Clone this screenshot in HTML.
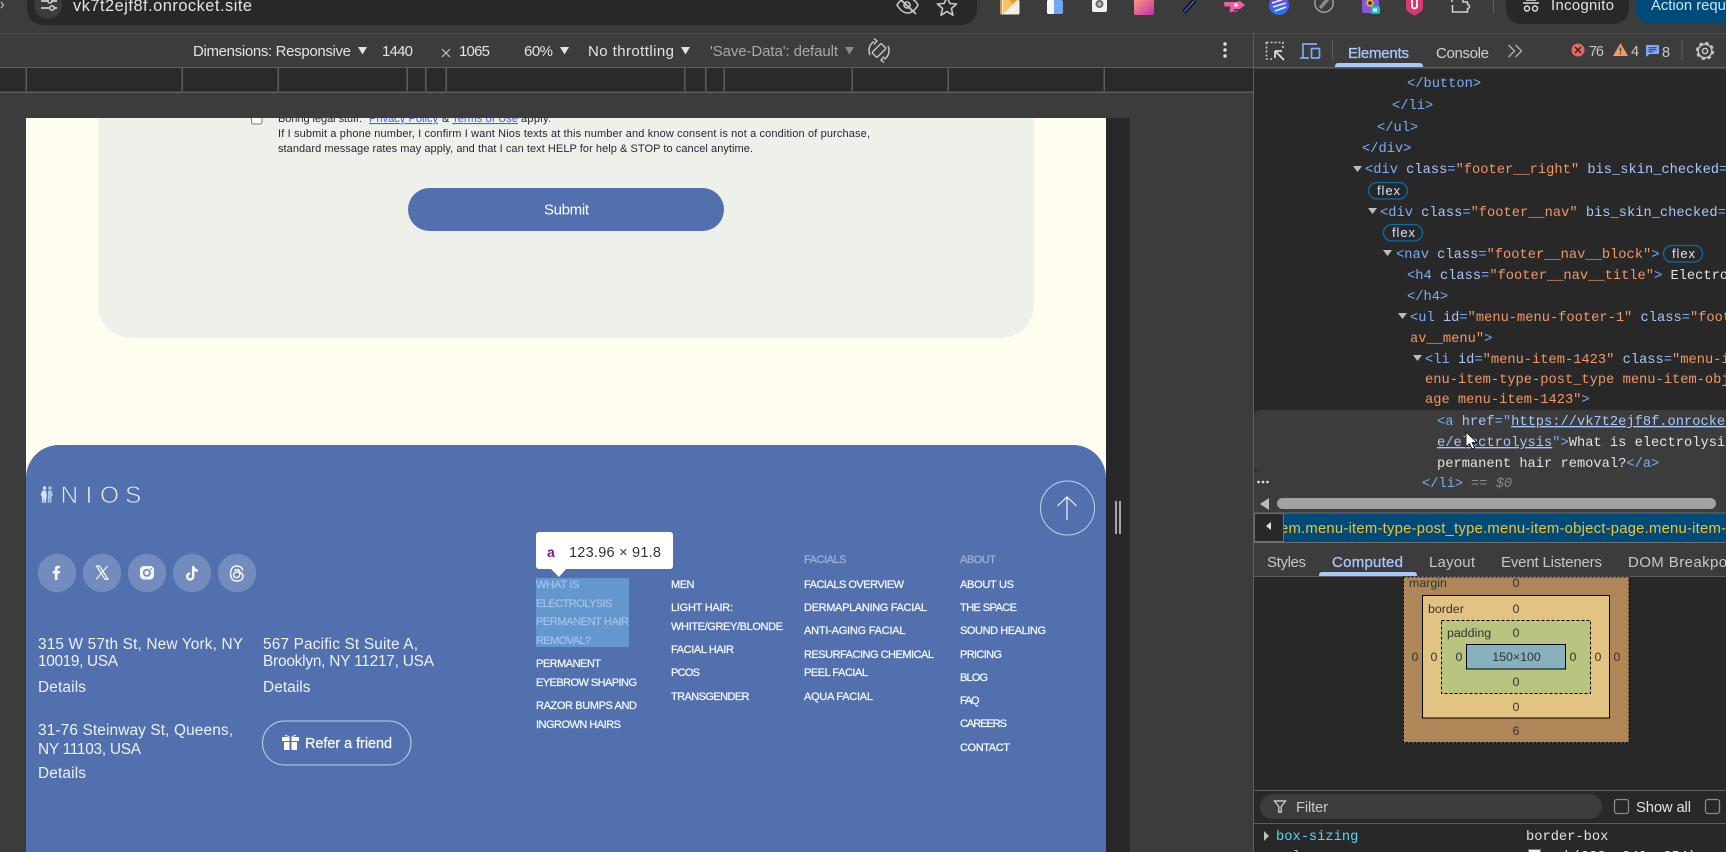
<!DOCTYPE html>
<html><head><meta charset="utf-8"><title>DevTools</title>
<style>
html,body{margin:0;padding:0;background:#3c3c3c;width:1726px;height:852px;overflow:hidden}
svg{display:block;font-family:"Liberation Sans",sans-serif}
.m{font-family:"Liberation Mono",monospace;font-size:13.72px}
.t{fill:#7cacf8}.a{fill:#a8c7fa}.v{fill:#f29766}.x{fill:#e3e3e3}
.l{font-size:11px;fill:#f6f8fc;stroke:#f6f8fc;stroke-width:.25px}
.h{font-size:11px;fill:#a4b4d8;stroke:#a4b4d8;stroke-width:.2px}
.hl{font-size:11px;fill:#a3c2e8;stroke:#a3c2e8;stroke-width:.2px}
.ad{font-size:15.4px;fill:#edf1f8}
.tb{font-size:15px;fill:#e3e3e3}
.dt{font-size:15px}
.bm{font-size:12.4px;fill:#333;text-anchor:middle}
.ml{font-size:12.4px;fill:#333}
</style></head><body>
<svg width="1726" height="852" viewBox="0 0 1726 852" xmlns="http://www.w3.org/2000/svg">
<defs>
<linearGradient id="g1" x1="0" y1="0" x2="1" y2="1"><stop offset="0" stop-color="#ffa07a"/><stop offset="1" stop-color="#c02cb0"/></linearGradient>
<linearGradient id="g2" x1="0" y1="0" x2="0" y2="1"><stop offset="0" stop-color="#7a3fe0"/><stop offset="1" stop-color="#1a7cf0"/></linearGradient>
</defs>
<rect width="1726" height="852" fill="#3c3c3c"/>

<!-- PAGE -->
<rect x="26" y="118" width="1080" height="734" fill="#fffdf0"/>
<rect x="1106" y="118" width="24" height="734" fill="#282828"/>
<path d="M98 100H1034V305a33 33 0 0 1-33 33H131a33 33 0 0 1-33-33Z" fill="#eef1ea"/>
<rect x="251.5" y="113" width="10.5" height="11" rx="2" fill="#fff" stroke="#777" stroke-width="1"/>
<g font-size="11" fill="#23263a">
<text x="278" y="122" textLength="84">Boring legal stuff:</text>
<text x="369" y="122" textLength="69" fill="#3f5cf0" text-decoration="underline">Privacy Policy</text>
<text x="442" y="122">&amp;</text>
<text x="452" y="122" textLength="66" fill="#3f5cf0" text-decoration="underline">Terms of Use</text>
<text x="521" y="122" textLength="30">apply.</text>
<text x="278" y="137" textLength="592">If I submit a phone number, I confirm I want Nios texts at this number and know consent is not a condition of purchase,</text>
<text x="278" y="152" textLength="475">standard message rates may apply, and that I can text HELP for help &amp; STOP to cancel anytime.</text>
</g>
<rect x="408" y="188" width="316" height="43" rx="21.5" fill="#5170ad"/>
<text x="544" y="214.500" font-size="15" fill="#fff" textLength="45">Submit</text>

<!-- FOOTER -->
<path d="M26 852V478a33 33 0 0 1 33-33H1073a33 33 0 0 1 33 33V852Z" fill="#5170ad"/>
<!-- logo -->
<g fill="#d6e3f5">
<circle cx="44.5" cy="488" r="1.7"/><path d="M42.5 490.5h3.5l.8 5-1 7.5h-1.2l-.5-5.5-.7 5.5h-1.2l-.4-7-1.2-1Z"/>
<circle cx="50" cy="488" r="1.7" fill="#a9c3e6"/><path d="M48 490.5h3.6l1.4 5-1.4.5-.4 7h-1.2l-.5-5.5-.6 5.5h-1.2l.2-7.5Z" fill="#a9c3e6"/>
</g>
<g font-size="24.500" fill="#e6ecf6" stroke="#5170ad" stroke-width=".75">
<text x="60.500" y="503">N</text><text x="85.500" y="503">I</text><text x="100" y="503">O</text><text x="125" y="503">S</text>
</g>
<!-- socials -->
<g fill="#fff" fill-opacity=".2">
<circle cx="57" cy="573" r="19.2"/><circle cx="102" cy="573" r="19.2"/><circle cx="147" cy="573" r="19.2"/><circle cx="192" cy="573" r="19.2"/><circle cx="237" cy="573" r="19.2"/>
</g>
<path d="M59.9 565.8h-1.9c-2 0-3.2 1.2-3.2 3.2v1.9h-2v2.6h2v6.5h2.8v-6.5h2.2l.4-2.6h-2.6v-1.6c0-.8.3-1.1 1.1-1.1h1.2Z" fill="#f3f5fa"/>
<path d="M96.5 566h3l8.5 13.2h-3Z" fill="none" stroke="#f3f5fa" stroke-width="1.3"/><path d="M107.6 566 96.2 579.2" stroke="#f3f5fa" stroke-width="1.1"/>
<rect x="140" y="566" width="14" height="13.5" rx="4" fill="#f3f5fa"/><circle cx="146.8" cy="572.8" r="3.1" fill="none" stroke="#7389bd" stroke-width="1.7"/><circle cx="151" cy="569" r=".9" fill="#7389bd"/>
<path d="M193.2 566v10.5a3 3 0 1 1-3-3M193.2 566.5c.4 2.5 2 4 4.6 4.3" fill="none" stroke="#f3f5fa" stroke-width="2.5"/>
<path d="M243 570.5C242 567.5 240 566 237 566C232.3 566 230.6 569.3 230.6 573.5C230.6 578 232.3 581 237 581C241 581 243 579 243 576.2C243 573.2 240.4 572 237.3 572C234.8 572 233.6 573.5 233.6 575C233.6 576.6 235 577.6 236.6 577.6C238.6 577.6 239.9 576 239.9 573.2C239.9 570.6 238.6 569.6 237 569.6C236 569.6 235.1 570 234.5 571" fill="none" stroke="#f3f5fa" stroke-width="1.5"/>
<!-- addresses -->
<text class="ad" x="38" y="649" textLength="205">315 W 57th St, New York, NY</text>
<text class="ad" x="38" y="666" textLength="80">10019, USA</text>
<text class="ad" x="38" y="692" textLength="48">Details</text>
<text class="ad" x="263" y="649" textLength="155">567 Pacific St Suite A,</text>
<text class="ad" x="263" y="666" textLength="171">Brooklyn, NY 11217, USA</text>
<text class="ad" x="263" y="692" textLength="47.5">Details</text>
<text class="ad" x="38" y="735" textLength="195">31-76 Steinway St, Queens,</text>
<text class="ad" x="38" y="754" textLength="103">NY 11103, USA</text>
<text class="ad" x="38" y="778" textLength="48">Details</text>
<rect x="262.5" y="721" width="148.5" height="44" rx="22" fill="none" stroke="#c5cfe3" stroke-width="1"/>
<g fill="#fffdf0"><rect x="282" y="737" width="17" height="4"/><rect x="284" y="742" width="13" height="8"/>
<path d="M285 734.5l5.5 2.5 5.5-2.5v1.2l-5 1.6h-1l-5-1.6Z"/></g>
<rect x="289.5" y="736" width="2" height="15" fill="#5170ad"/>
<text x="305" y="748" font-size="14.400" fill="#f6f5ea" stroke="#f6f5ea" stroke-width=".3" textLength="87">Refer a friend</text>
<!-- up -->
<circle cx="1067.5" cy="508" r="27" fill="none" stroke="#c5cfe3" stroke-width="1"/>
<path d="M1067 520V497M1057.5 506l9.5-9 9.5 9" fill="none" stroke="#f0f3f9" stroke-width="1.2"/>
<!-- nav highlight -->
<rect x="536" y="578" width="93" height="69" fill="#6597cf"/>
<text class="hl" x="536" y="588" textLength="43.5">WHAT IS</text>
<text class="hl" x="536" y="607" textLength="76.5">ELECTROLYSIS</text>
<text class="hl" x="536" y="625" textLength="93">PERMANENT HAIR</text>
<text class="hl" x="536" y="644" textLength="55">REMOVAL?</text>
<text class="l" x="536" y="667" textLength="65">PERMANENT</text>
<text class="l" x="536" y="686" textLength="101">EYEBROW SHAPING</text>
<text class="l" x="536" y="709" textLength="101">RAZOR BUMPS AND</text>
<text class="l" x="536" y="728" textLength="85">INGROWN HAIRS</text>

<text class="l" x="671" y="588" textLength="23.5">MEN</text>
<text class="l" x="671" y="611" textLength="62">LIGHT HAIR:</text>
<text class="l" x="671" y="630" textLength="112">WHITE/GREY/BLONDE</text>
<text class="l" x="671" y="653" textLength="63">FACIAL HAIR</text>
<text class="l" x="671" y="676" textLength="29">PCOS</text>
<text class="l" x="671" y="700" textLength="78.5">TRANSGENDER</text>

<text class="h" x="804" y="563" textLength="42.5">FACIALS</text>
<text class="l" x="804" y="588" textLength="100">FACIALS OVERVIEW</text>
<text class="l" x="804" y="611" textLength="123">DERMAPLANING FACIAL</text>
<text class="l" x="804" y="634" textLength="101.5">ANTI-AGING FACIAL</text>
<text class="l" x="804" y="658" textLength="130">RESURFACING CHEMICAL</text>
<text class="l" x="804" y="676" textLength="64">PEEL FACIAL</text>
<text class="l" x="804" y="700" textLength="69">AQUA FACIAL</text>

<text class="h" x="960" y="563" textLength="36">ABOUT</text>
<text class="l" x="960" y="588" textLength="54">ABOUT US</text>
<text class="l" x="960" y="611" textLength="57">THE SPACE</text>
<text class="l" x="960" y="634" textLength="86">SOUND HEALING</text>
<text class="l" x="960" y="658" textLength="42">PRICING</text>
<text class="l" x="960" y="681" textLength="28">BLOG</text>
<text class="l" x="960" y="704" textLength="19.5">FAQ</text>
<text class="l" x="960" y="727" textLength="47">CAREERS</text>
<text class="l" x="960" y="751" textLength="50">CONTACT</text>
<!-- tooltip -->
<rect x="536" y="532" width="137" height="37" rx="3" fill="#fff"/>
<path d="M551 569h15l-7 8Z" fill="#fff"/>
<text x="547" y="557" font-size="14" font-weight="700" fill="#881280">a</text>
<text x="569" y="557" font-size="14.5" fill="#333" textLength="92">123.96 × 91.8</text>
<!-- gripper -->
<rect x="1115" y="501" width="2" height="33" fill="#a8a8a8"/><rect x="1119" y="501" width="2" height="33" fill="#a8a8a8"/>

<!-- CHROME TOP -->
<rect x="0" y="0" width="1726" height="118" fill="#3c3c3c"/>
<path d="M27 0H977V9a16 16 0 0 1-16 16H43a16 16 0 0 1-16-16Z" fill="#282828"/>
<path d="M1 2l2.5 3L1 8" fill="none" stroke="#bbb" stroke-width="1.2"/>
<circle cx="48" cy="5" r="14" fill="#3c3c3c"/>
<path d="M41 1h7M52 1h5M41 8h8M54 8h3" stroke="#e3e3e3" stroke-width="1.4"/><circle cx="50" cy="1" r="2" fill="none" stroke="#e3e3e3" stroke-width="1.3"/><circle cx="52" cy="8" r="2.2" fill="none" stroke="#e3e3e3" stroke-width="1.3"/>
<text x="73" y="11" font-size="16.400" fill="#e3e3e3" textLength="179">vk7t2ejf8f.onrocket.site</text>
<path d="M897 5c3-5 7-7 10.500-7s8 2 10.500 7c-2.500 5-7 8-10.500 8s-7.500-3-10.500-8Z" fill="none" stroke="#c7c7c7" stroke-width="1.6"/><circle cx="907" cy="5" r="3" fill="none" stroke="#c7c7c7" stroke-width="1.6"/><path d="M900-1l16 15" stroke="#c7c7c7" stroke-width="1.8"/>
<path d="M947-3l2.800 6.400 6.800.600-5.200 4.500 1.600 6.700-6-3.600-6 3.600 1.600-6.700-5.200-4.500 6.800-.600Z" fill="none" stroke="#c7c7c7" stroke-width="1.6" stroke-linejoin="round"/>
<!-- extensions -->
<rect x="1000" y="0" width="19.500" height="14.500" rx="1.500" fill="#f1efe9"/><path d="M1003 0h14l-9 9-5 5Z" fill="#f7c25e"/><path d="M1009 0h8l-4 4Z" fill="#ef9436"/><rect x="1000" y="0" width="2" height="14" fill="#d9922e"/>
<rect x="1047" y="0" width="16" height="14" rx="2" fill="#6ea8f2"/><rect x="1047" y="0" width="7" height="14" rx="1.500" fill="#f3f6fb"/>
<rect x="1092" y="-2" width="15" height="14" rx="2" fill="#f2f2f2"/><circle cx="1099.500" cy="4" r="4" fill="#6d6d6d"/><circle cx="1099.500" cy="4" r="2" fill="#b9b9b9"/>
<rect x="1134" y="-2" width="20" height="17" rx="2" fill="url(#g1)"/>
<path d="M1184 12l11-12" stroke="#0d0d0d" stroke-width="4.500"/><path d="M1184.500 11.500l10-11" stroke="#3a63c8" stroke-width="1.600"/>
<path d="M1224 2h12l4-1 5 4-5 4h-6l.5 3.500 5-3-10 3 1-6h-6Z" fill="#ec5fa8"/><circle cx="1236" cy="5" r="2" fill="#fbd2e6"/>
<circle cx="1279" cy="5" r="10" fill="url(#g2)"/><path d="M1272 3l12-4M1273 7l13-4M1275 11l11-4" stroke="#f2f0fb" stroke-width="1.600"/>
<circle cx="1324" cy="3" r="9.200" fill="none" stroke="#a5a5a5" stroke-width="1.400"/><path d="M1320 8l8-9" stroke="#8b8b8b" stroke-width="3.500"/>
<rect x="1362" y="-2" width="17" height="15" rx="2" fill="#8457da"/><circle cx="1370" cy="3" r="3.800" fill="#f4a72c"/><circle cx="1370" cy="3" r="1.800" fill="#2b2340"/><rect x="1371" y="6" width="9" height="8" rx="2" fill="#14c2c6"/><rect x="1373" y="8.500" width="4" height="3" fill="#eafcfc"/>
<path d="M1406-2h17v10c0 3-4 5.500-8.500 7.500-4.500-2-8.500-4.500-8.500-7.500Z" fill="#d9386f"/><path d="M1412 0v6a2.500 2.500 0 0 0 5 0V0" fill="none" stroke="#fff" stroke-width="1.800"/>
<path d="M1452-2v4M1463-2v4h4.500v2.500a2 2 0 0 1 0 4V12h-15V5" fill="none" stroke="#d2d2d2" stroke-width="1.500"/>
<rect x="1493" y="0" width="1" height="14" fill="#5e5e5e"/>
<path d="M1506 0H1629V9a15 15 0 0 1-15 15H1521a15 15 0 0 1-15-15Z" fill="#282828"/>
<path d="M1523 3h16M1526 0h10" stroke="#e3e3e3" stroke-width="1.600"/><circle cx="1527" cy="8.500" r="2.500" fill="none" stroke="#e3e3e3" stroke-width="1.400"/><circle cx="1535" cy="8.500" r="2.500" fill="none" stroke="#e3e3e3" stroke-width="1.400"/>
<text x="1551" y="10" font-size="14.800" fill="#e3e3e3" textLength="63">Incognito</text>
<path d="M1636 0H1726V24H1651a15 15 0 0 1-15-15Z" fill="#004a77"/>
<text x="1651" y="10" font-size="14.800" fill="#c2e7ff">Action requ</text>

<!-- device toolbar -->
<rect x="0" y="33" width="1726" height="1" fill="#4c4c4c"/>
<text class="tb" x="193" y="56" textLength="158">Dimensions: Responsive</text>
<path d="M358 47h9l-4.500 7.500Z" fill="#e3e3e3"/>
<text class="tb" x="382" y="56" textLength="31">1440</text>
<path d="M442 49l8 8M450 49l-8 8" stroke="#c7c7c7" stroke-width="1.200"/>
<text class="tb" x="459" y="56" textLength="31">1065</text>
<text class="tb" x="524" y="56" textLength="29">60%</text>
<path d="M560 47h9l-4.500 7.500Z" fill="#e3e3e3"/>
<text class="tb" x="588" y="56" textLength="86">No throttling</text>
<path d="M681 47h9l-4.500 7.500Z" fill="#e3e3e3"/>
<text class="tb" x="710" y="56" textLength="128" style="fill:#a8a8a8">'Save-Data': default</text>
<path d="M845 47h9l-4.500 7.500Z" fill="#8a8a8a"/>
<g transform="rotate(45 879 50.500)" fill="none" stroke="#c7c7c7" stroke-width="1.400">
<rect x="875.500" y="44" width="7" height="13" rx="1.200"/></g>
<path d="M870 55a10.500 10.500 0 0 1 4-13.500M888 46a10.500 10.500 0 0 1-4 13.500" fill="none" stroke="#c7c7c7" stroke-width="1.500"/>
<path d="M874 38.500l3 2.500-3 3.500M884 62.500l-3-2.500 3-3.500" fill="none" stroke="#c7c7c7" stroke-width="1.400"/>
<circle cx="1225" cy="44" r="1.700" fill="#e3e3e3"/><circle cx="1225" cy="50" r="1.700" fill="#e3e3e3"/><circle cx="1225" cy="56" r="1.700" fill="#e3e3e3"/>

<!-- ruler -->
<rect x="0" y="67" width="1253" height="1.500" fill="#5e5e5e"/>
<rect x="0" y="68" width="1253" height="24" fill="#2a2a2c"/>
<rect x="0" y="91.500" width="1253" height="1.500" fill="#5e5e5e"/>
<g fill="#5e5e5e">
<rect x="25.500" y="68" width="1.500" height="23"/><rect x="181.500" y="68" width="1.500" height="23"/><rect x="277.500" y="68" width="1.500" height="23"/><rect x="406.500" y="68" width="1.500" height="23"/><rect x="425" y="68" width="1.500" height="23"/><rect x="445.500" y="68" width="1.500" height="23"/><rect x="684" y="68" width="1.500" height="23"/><rect x="705" y="68" width="1.500" height="23"/><rect x="723.500" y="68" width="1.500" height="23"/><rect x="851.500" y="68" width="1.500" height="23"/><rect x="947.500" y="68" width="1.500" height="23"/><rect x="1103.500" y="68" width="1.500" height="23"/>
</g>

<!-- DEVTOOLS -->
<rect x="1254" y="34" width="472" height="33" fill="#3c3c3c"/>
<rect x="1254" y="68" width="472" height="426" fill="#282828"/>
<rect x="1253" y="33" width="1" height="819" fill="#5e5e5e"/>
<rect x="1254" y="67" width="472" height="1.500" fill="#5e5e5e"/>
<rect x="1266.500" y="42.500" width="16.500" height="16.500" fill="none" stroke="#c7c7c7" stroke-width="1.600" stroke-dasharray="2 2"/>
<rect x="1274" y="50" width="11" height="11" fill="#3c3c3c"/>
<path d="M1275 51h7M1275 51v7M1275 51l9 9" fill="none" stroke="#dcdcdc" stroke-width="1.800"/>
<path d="M1300 58h9M1303 58V44h14" fill="none" stroke="#7cacf8" stroke-width="1.700"/>
<rect x="1311.500" y="48.500" width="8" height="9.500" rx=".8" fill="none" stroke="#7cacf8" stroke-width="1.700"/>
<rect x="1332" y="40" width="1" height="20" fill="#5e5e5e"/>
<text class="dt" x="1348" y="58" fill="#a8c7fa" stroke="#a8c7fa" stroke-width=".3" textLength="61">Elements</text>
<text class="dt" x="1436" y="58" fill="#d0d0d0" textLength="53">Console</text>
<path d="M1335 67v-1a3 3 0 0 1 3-3h82a3 3 0 0 1 3 3v1Z" fill="#a8c7fa"/>
<path d="M1508.500 45l6 6-6 6M1515.500 45l6 6-6 6" fill="none" stroke="#a8a8a8" stroke-width="1.500"/>
<circle cx="1578" cy="50" r="6.500" fill="#e46962"/><path d="M1575 47l6 6M1581 47l-6 6" stroke="#3c2020" stroke-width="1.500"/>
<text x="1589" y="56" font-size="14.500" fill="#c7c7c7" textLength="15">76</text>
<path d="M1620.500 43l7.500 13h-15Z" fill="#f29766"/><path d="M1620.500 47.500v4M1620.500 52.800v1.400" stroke="#3c3c3c" stroke-width="1.300"/>
<text x="1631" y="56" font-size="14.500" fill="#c7c7c7">4</text>
<path d="M1646 45h13v9h-9.500l-3.500 3Z" fill="#7cacf8"/><path d="M1648.500 47.700h8M1648.500 49.700h8M1648.500 51.700h5" stroke="#2a3b58" stroke-width="1"/>
<text x="1662" y="57" font-size="14.500" fill="#c7c7c7">8</text>
<rect x="1681.500" y="40" width="1" height="20" fill="#5e5e5e"/>
<circle cx="1705" cy="51" r="6.800" fill="none" stroke="#c7c7c7" stroke-width="1.500"/>
<circle cx="1705" cy="51" r="8" fill="none" stroke="#c7c7c7" stroke-width="2.200" stroke-dasharray="3.300 3"/>
<circle cx="1705" cy="51" r="2.600" fill="none" stroke="#c7c7c7" stroke-width="1.500"/>

<!-- selected rows -->
<path d="M1264 410H1726V472H1254V416a6 6 0 0 1 6-6Z" fill="#3c3c3c"/>
<rect x="1254" y="472" width="472" height="41" fill="#3c3c3c"/>
<path d="M1254 472h6a6 6 0 0 1-6-6Z" fill="#282828"/>

<!-- code -->
<g fill="#bdbdbd"><path d="M1353 166h9l-4.500 6Z"/><path d="M1368 208h9l-4.500 6Z"/><path d="M1383 250h9l-4.500 6Z"/><path d="M1398 313h9l-4.500 6Z"/><path d="M1413 355h9l-4.500 6Z"/></g>
<text class="m t" x="1407" y="87">&lt;/button&gt;</text>
<text class="m t" x="1392" y="109">&lt;/li&gt;</text>
<text class="m t" x="1377" y="131">&lt;/ul&gt;</text>
<text class="m t" x="1362" y="152">&lt;/div&gt;</text>
<text class="m t" x="1365" y="173">&lt;div <tspan class="a">class</tspan>=<tspan class="v">"footer__right"</tspan> <tspan class="a">bis_skin_checked</tspan>=</text>
<text class="m t" x="1380" y="216">&lt;div <tspan class="a">class</tspan>=<tspan class="v">"footer__nav"</tspan> <tspan class="a">bis_skin_checked</tspan>=</text>
<text class="m t" x="1396" y="258">&lt;nav <tspan class="a">class</tspan>=<tspan class="v">"footer__nav__block"</tspan>&gt;</text>
<text class="m t" x="1407" y="279">&lt;h4 <tspan class="a">class</tspan>=<tspan class="v">"footer__nav__title"</tspan>&gt; <tspan class="x">Electrolysis</tspan></text>
<text class="m t" x="1407" y="300">&lt;/h4&gt;</text>
<text class="m t" x="1410" y="321">&lt;ul <tspan class="a">id</tspan>=<tspan class="v">"menu-menu-footer-1"</tspan> <tspan class="a">class</tspan>=<tspan class="v">"footer__n</tspan></text>
<text class="m t" x="1410" y="342"><tspan class="v">av__menu"</tspan>&gt;</text>
<text class="m t" x="1425" y="363">&lt;li <tspan class="a">id</tspan>=<tspan class="v">"menu-item-1423"</tspan> <tspan class="a">class</tspan>=<tspan class="v">"menu-item m</tspan></text>
<text class="m v" x="1425" y="383">enu-item-type-post_type menu-item-object-p</text>
<text class="m t" x="1425" y="403"><tspan class="v">age menu-item-1423"</tspan>&gt;</text>
<text class="m t" x="1437" y="425">&lt;a <tspan class="a">href</tspan>="<tspan class="a" text-decoration="underline">https://vk7t2ejf8f.onrocket.sit</tspan></text>
<text class="m t" x="1437" y="446"><tspan class="a" text-decoration="underline">e/electrolysis</tspan>"&gt;<tspan class="x">What is electrolysis</tspan></text>
<text class="m t" x="1437" y="467"><tspan class="x">permanent hair removal?</tspan>&lt;/a&gt;</text>
<text class="m t" x="1422" y="487">&lt;/li&gt;</text>
<text class="m" x="1471" y="487" fill="#8a8a8a">== <tspan font-style="italic">$0</tspan></text>
<!-- flex badges -->
<g fill="none" stroke="#0a6fa8" stroke-width="1.300">
<rect x="1368.500" y="182.500" width="39" height="16.500" rx="8.200"/><rect x="1383.500" y="224.500" width="39" height="16.500" rx="8.200"/><rect x="1663.500" y="245.500" width="39" height="16.500" rx="8.200"/></g>
<g font-size="13" fill="#d7e3f4">
<text x="1377" y="195" textLength="23">flex</text><text x="1392" y="237" textLength="23">flex</text><text x="1672" y="258" textLength="23">flex</text></g>
<!-- cursor -->
<path d="M1466 432v15l3.600-3.300 2.400 5.300 2.600-1.200-2.400-5.200h4.800Z" fill="#fff" stroke="#111" stroke-width=".9"/>
<circle cx="1258.500" cy="482" r="1.300" fill="#e3e3e3"/><circle cx="1263" cy="482" r="1.300" fill="#e3e3e3"/><circle cx="1267.500" cy="482" r="1.300" fill="#e3e3e3"/>
<!-- scrollbar -->
<path d="M1269 498v12l-9-6Z" fill="#bdbdbd"/>
<rect x="1277" y="498" width="439" height="11" rx="5.500" fill="#a2a2a2"/>
<!-- breadcrumb -->
<rect x="1254" y="513" width="472" height="29" fill="#004a77"/>
<text x="1280" y="533" font-size="14.800" fill="#f2c233" textLength="446">em.menu-item-type-post_type.menu-item-object-page.menu-item-</text>
<rect x="1254.500" y="513.500" width="29" height="28" fill="#282828" stroke="#6e6e6e"/>
<path d="M1271 522v8l-5-4Z" fill="#e3e3e3"/>
<rect x="1254" y="512.500" width="472" height="1" fill="#6e6e6e"/><rect x="1254" y="542" width="472" height="1" fill="#6e6e6e"/>
<!-- tabs -->
<rect x="1254" y="543" width="472" height="33" fill="#3c3c3c"/>
<text class="dt" x="1267" y="567" fill="#c7c7c7" textLength="39">Styles</text>
<text class="dt" x="1332" y="567" fill="#a8c7fa" stroke="#a8c7fa" stroke-width=".3" textLength="71">Computed</text>
<text class="dt" x="1429" y="567" fill="#c7c7c7" textLength="46">Layout</text>
<text class="dt" x="1501" y="567" fill="#c7c7c7" textLength="101">Event Listeners</text>
<text class="dt" x="1628" y="567" fill="#c7c7c7" textLength="124">DOM Breakpoints</text>
<path d="M1319 576v-1a3 3 0 0 1 3-3h92a3 3 0 0 1 3 3v1Z" fill="#a8c7fa"/>
<rect x="1254" y="576" width="472" height="1" fill="#5e5e5e"/>
<rect x="1254" y="577" width="472" height="275" fill="#282828"/>
<!-- box model -->
<rect x="1403.500" y="577" width="225.500" height="165.500" fill="#ae8657" stroke="#000" stroke-dasharray="2 2"/>
<rect x="1422.500" y="595.500" width="187" height="122.500" fill="#e3c381" stroke="#000"/>
<rect x="1441.500" y="620.500" width="149" height="73" fill="#b8c47f" stroke="#000" stroke-dasharray="3 2"/>
<rect x="1466.500" y="644.500" width="99" height="24.500" fill="#87b1bc" stroke="#000"/>
<text class="ml" x="1409" y="587">margin</text><text class="bm" x="1516" y="587">0</text>
<text class="ml" x="1428" y="613">border</text><text class="bm" x="1516" y="613">0</text>
<text class="ml" x="1447" y="637">padding</text><text class="bm" x="1516" y="637">0</text>
<text class="bm" x="1516.500" y="661">150×100</text>
<text class="bm" x="1415" y="661">0</text><text class="bm" x="1434" y="661">0</text><text class="bm" x="1459" y="661">0</text><text class="bm" x="1573" y="661">0</text><text class="bm" x="1598" y="661">0</text><text class="bm" x="1617" y="661">0</text>
<text class="bm" x="1516" y="686">0</text><text class="bm" x="1516" y="711">0</text><text class="bm" x="1516" y="735">6</text>
<!-- filter -->
<rect x="1254" y="790" width="472" height="1" fill="#5e5e5e"/>
<rect x="1260" y="794" width="342" height="25" rx="12.500" fill="#3c3c3c"/>
<path d="M1274.500 801h11l-4.300 5.500v5.500h-2.400v-5.500Z" fill="none" stroke="#c7c7c7" stroke-width="1.400"/>
<text x="1296" y="812" font-size="14.800" fill="#c7c7c7" textLength="32">Filter</text>
<rect x="1614.500" y="799.500" width="14" height="14" rx="2.500" fill="none" stroke="#8a8a8a" stroke-width="1.300"/>
<text x="1636" y="812" font-size="14.800" fill="#e3e3e3" textLength="55">Show all</text>
<rect x="1705.500" y="799.500" width="14" height="14" rx="2.500" fill="none" stroke="#8a8a8a" stroke-width="1.300"/>
<rect x="1254" y="823" width="472" height="1" fill="#5e5e5e"/>
<path d="M1264 831l5 5-5 5Z" fill="#bdbdbd"/>
<text class="m" x="1276" y="840" fill="#5cd5fb">box-sizing</text>
<text class="m" x="1526" y="840" fill="#e3e3e3">border-box</text>
<text class="m" x="1276" y="860" fill="#5cd5fb">color</text>
<rect x="1528.500" y="849.500" width="12" height="12" fill="#e8f0fe" stroke="#777"/>
<text class="m" x="1548" y="860" fill="#e3e3e3">rgb(232, 240, 254)</text>
</svg>
</body></html>
